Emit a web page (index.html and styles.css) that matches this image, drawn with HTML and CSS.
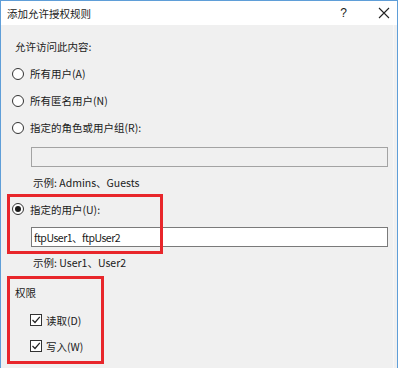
FILE: index.html
```html
<!DOCTYPE html>
<html lang="zh-CN">

<head>
    <meta charset="UTF-8">
    <title>添加允许授权规则</title>
    <link rel="stylesheet" href="styles.css">
</head>

<body>
    <section class="window">
        <header class="titlebar">
            <span class="title">添加允许授权规则</span>
            <span class="help">?</span>
            <svg class="close" width="12" height="12" viewBox="0 0 12 12">
                <path d="M1 1 L11 11 M11 1 L1 11" stroke="#222" stroke-width="1.1" fill="none" />
            </svg>
        </header>

        <main class="content">
            <div class="row label">允许访问此内容:</div>

            <label class="row radio-row"><span class="radio"></span>所有用户(A)</label>
            <label class="row radio-row"><span class="radio"></span>所有匿名用户(N)</label>
            <label class="row radio-row"><span class="radio"></span>指定的角色或用户组(R):</label>
            <div class="textbox disabled"></div>
            <div class="row example">示例: Admins、Guests</div>

            <label class="row radio-row user-row"><span class="radio checked"></span>指定的用户(U):</label>
            <div class="textbox value">ftpUser1、ftpUser2</div>
            <div class="row example">示例: User1、User2</div>

            <div class="row label perm">权限</div>
            <label class="row check-row"><span class="check"></span>读取(D)</label>
            <label class="row check-row"><span class="check"></span>写入(W)</label>
        </main>
    </section>

    <!-- rode markeringer -->
    <div class="mark mark-user"></div>
    <div class="mark mark-perm"></div>

    <template class="check-svg">
        <svg width="10" height="10" viewBox="0 0 10 10">
            <path d="M1.5 5 L4 7.5 L8.8 1.8" stroke="#222" stroke-width="1.2" fill="none" />
        </svg>
    </template>

    <script>
        document.querySelectorAll(".check").forEach(boks => {
            let klon = document.querySelector(".check-svg").cloneNode(true).content;
            boks.appendChild(klon);
        });
    </script>
</body>

</html>
```

FILE: styles.css
```css
body {
    margin: 0;
    position: relative;
    width: 400px;
    height: 368px;
    overflow: hidden;
    background-color: white;
    font-family: "Noto Sans CJK SC", "Noto Sans", sans-serif;
    font-size: 10.5px;
    color: #1a1a1a;
}

.window {
    width: 396px;
    height: 367px;
    border: 1px solid #5f9ed8;
    border-bottom: none;
    background-color: #f0f0f0;
}

.titlebar {
    height: 24px;
    display: flex;
    align-items: center;
    background-color: white;
    padding-left: 6px;
}

.title {
    flex: 1;
    font-size: 10.5px;
}

.help {
    font-family: "Liberation Sans", sans-serif;
    font-size: 12px;
    margin-right: 31px;
}

.close {
    margin-right: 7px;
}

.content {
    padding-top: 8px;
    margin-right: 3px;
    height: 335px;
    background-color: #f0f0f0;
    border-right: 1px solid #f7f7f7;
}

.row {
    display: flex;
    align-items: center;
}

.label {
    height: 27px;
    padding-left: 14px;
}

.radio-row {
    height: 27px;
    padding-left: 11px;
}

.user-row {
    height: 24px;
}

.radio {
    width: 10px;
    height: 10px;
    border: 1px solid #333;
    border-radius: 50%;
    background-color: white;
    margin-right: 6px;
    display: flex;
    align-items: center;
    justify-content: center;
}

.radio.checked::after {
    content: "";
    width: 6px;
    height: 6px;
    border-radius: 50%;
    background-color: #1a1a1a;
}

.textbox {
    margin: 6px 0 0 30px;
    width: 353px;
    height: 18px;
    border: 1px solid #7a7a7a;
    background-color: white;
    display: flex;
    align-items: center;
    padding-left: 2px;
    box-sizing: content-box;
}

.textbox.value {
    letter-spacing: -0.5px;
}

.textbox.disabled {
    background-color: #f0f0f0;
    border-color: #a3a3a3;
}

.example {
    height: 30px;
    padding-left: 32px;
}

.perm {
    height: 30px;
}

.check-row {
    height: 26px;
    padding-left: 29px;
}

.check {
    width: 10px;
    height: 10px;
    border: 1px solid #333;
    background-color: white;
    margin-right: 4px;
    display: flex;
    align-items: center;
    justify-content: center;
}

.mark {
    position: absolute;
    border: 3px solid #e8262b;
    box-sizing: border-box;
}

.mark-user {
    left: 7px;
    top: 194px;
    width: 156px;
    height: 60px;
}

.mark-perm {
    left: 7px;
    top: 276px;
    width: 97px;
    height: 88px;
}
```
